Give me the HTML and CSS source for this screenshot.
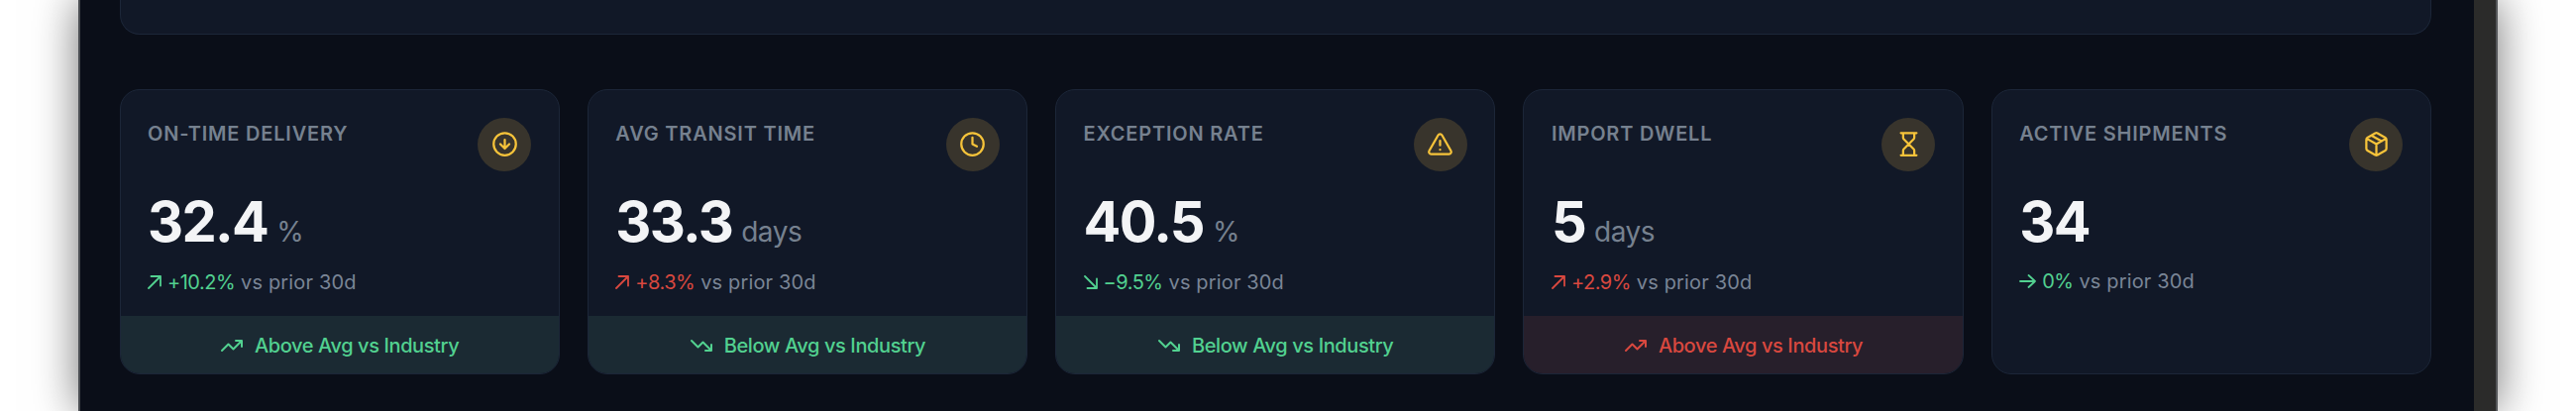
FILE: index.html
```html
<!DOCTYPE html>
<html lang="en">
<head>
<meta charset="utf-8">
<title>Logistics KPIs</title>
<link rel="stylesheet" href="styles.css">
</head>
<body>
<div class="frame">
  <main class="panel">
    <div class="stub"></div>
    <section class="kpis">
      <article class="card">
        <div class="body">
          <header class="head">
            <h3 class="label">ON-TIME DELIVERY</h3>
            <span class="badge"><svg class="ico" viewBox="0 0 24 24"><circle cx="12" cy="12" r="10"/><path d="M12 8v8M8 12l4 4 4-4"/></svg></span>
          </header>
          <div class="value"><span class="num">32.4</span><span class="unit">%</span></div>
          <div class="delta"><svg class="arrow good" viewBox="0 0 14 14"><path d="M1 13 13 1M3.500 1H13v9.500"/></svg><span class="good">+10.2%</span><span class="muted">vs prior 30d</span></div>
        </div>
        <footer class="foot foot-good"><svg class="trend" viewBox="0 0 24 24"><path d="M22 7l-8.500 8.500-5-5L2 17M16 7h6v6"/></svg>Above Avg vs Industry</footer>
      </article>
      <article class="card">
        <div class="body">
          <header class="head">
            <h3 class="label">AVG TRANSIT TIME</h3>
            <span class="badge"><svg class="ico" viewBox="0 0 24 24"><circle cx="12" cy="12" r="10"/><path d="M12 6v6l4 2"/></svg></span>
          </header>
          <div class="value"><span class="num">33.3</span><span class="unit">days</span></div>
          <div class="delta"><svg class="arrow bad" viewBox="0 0 14 14"><path d="M1 13 13 1M3.500 1H13v9.500"/></svg><span class="bad">+8.3%</span><span class="muted">vs prior 30d</span></div>
        </div>
        <footer class="foot foot-good"><svg class="trend" viewBox="0 0 24 24"><path d="M22 17l-8.500-8.500-5 5L2 7M16 17h6v-6"/></svg>Below Avg vs Industry</footer>
      </article>
      <article class="card">
        <div class="body">
          <header class="head">
            <h3 class="label">EXCEPTION RATE</h3>
            <span class="badge"><svg class="ico" viewBox="0 0 24 24"><path d="m21.730 18-8-14a2 2 0 0 0-3.480 0l-8 14A2 2 0 0 0 4 21h16a2 2 0 0 0 1.730-3ZM12 9v4M12 17h.01"/></svg></span>
          </header>
          <div class="value"><span class="num">40.5</span><span class="unit">%</span></div>
          <div class="delta"><svg class="arrow good" viewBox="0 0 14 14"><path d="M1 1 13 13M13 3.500V13H3.500"/></svg><span class="good">−9.5%</span><span class="muted">vs prior 30d</span></div>
        </div>
        <footer class="foot foot-good"><svg class="trend" viewBox="0 0 24 24"><path d="M22 17l-8.500-8.500-5 5L2 7M16 17h6v-6"/></svg>Below Avg vs Industry</footer>
      </article>
      <article class="card">
        <div class="body">
          <header class="head">
            <h3 class="label">IMPORT DWELL</h3>
            <span class="badge"><svg class="ico" viewBox="0 0 24 24"><path d="M5 22h14M5 2h14M17 22v-4.172a2 2 0 0 0-.586-1.414L12 12l-4.414 4.414A2 2 0 0 0 7 17.828V22M7 2v4.172a2 2 0 0 0 .586 1.414L12 12l4.414-4.414A2 2 0 0 0 17 6.172V2"/></svg></span>
          </header>
          <div class="value"><span class="num">5</span><span class="unit">days</span></div>
          <div class="delta"><svg class="arrow bad" viewBox="0 0 14 14"><path d="M1 13 13 1M3.500 1H13v9.500"/></svg><span class="bad">+2.9%</span><span class="muted">vs prior 30d</span></div>
        </div>
        <footer class="foot foot-bad"><svg class="trend" viewBox="0 0 24 24"><path d="M22 7l-8.500 8.500-5-5L2 17M16 7h6v6"/></svg>Above Avg vs Industry</footer>
      </article>
      <article class="card">
        <div class="body">
          <header class="head">
            <h3 class="label">ACTIVE SHIPMENTS</h3>
            <span class="badge"><svg class="ico" viewBox="0 0 24 24"><path d="M7.500 4.270l9 5.150M21 8a2 2 0 0 0-1-1.730l-7-4a2 2 0 0 0-2 0l-7 4A2 2 0 0 0 3 8v8a2 2 0 0 0 1 1.730l7 4a2 2 0 0 0 2 0l7-4A2 2 0 0 0 21 16ZM3.300 7l8.700 5 8.700-5M12 22V12"/></svg></span>
          </header>
          <div class="value"><span class="num">34</span></div>
          <div class="delta delta-flat"><svg class="arrow arrow-flat good" viewBox="0 0 17 14"><path d="M1 7h15M9.500 1 16 7l-6.500 6"/></svg><span class="good">0%</span><span class="muted">vs prior 30d</span></div>
        </div>
      </article>
    </section>
  </main>
  <div class="gutter"></div>
</div>
</body>
</html>
```
FILE: styles.css
```css
* { box-sizing: border-box; }
html, body { margin: 0; height: 100%; background: #fff; overflow: hidden; }
body { padding: 0 79px 0 79px; font-family: "Inter", "Liberation Sans", sans-serif; }
.frame {
  display: flex; height: 415px;
  box-shadow: 0 0 42px rgba(0,0,0,.55);
  border-left: 2px solid #4a4d52;
  border-right: 2px solid #55575a;
}
.panel { flex: 1; min-width: 0; background: #0a0e18; padding: 0 43px 0 39.500px; }
.gutter { width: 22px; background: #2b2b2a; }
.stub {
  height: 35px; background: #111827;
  border: 1.500px solid #1c2638; border-top: 0;
  border-radius: 0 0 20px 20px;
}
.kpis { display: grid; grid-template-columns: repeat(5, 1fr); gap: 28px; margin-top: 55px; }
.card {
  height: 288px; display: flex; flex-direction: column;
  background: #111827; border: 1.500px solid #1c2638; border-radius: 20px; overflow: hidden;
}
.body { flex: 1; padding: 27.500px 27.500px 0; }
.head { display: flex; justify-content: space-between; align-items: flex-start; }
.label { margin: 4px 0 0; font-size: 20px; line-height: 24px; font-weight: 600; letter-spacing: .8px; color: #76818f; }
.badge {
  width: 54px; height: 54px; border-radius: 50%; background: #38342c;
  display: flex; align-items: center; justify-content: center;
}
.ico { width: 27px; height: 27px; fill: none; stroke: #f6c33a; stroke-width: 2; stroke-linecap: round; stroke-linejoin: round; }
.value { display: flex; align-items: baseline; gap: 9px; margin-top: 17px; height: 68px; line-height: 68px; }
.num { font-size: 56px; font-weight: 700; color: #f3f4f6; letter-spacing: -1.700px; }
.unit { font-size: 28px; line-height: 1; font-weight: 400; color: #76818f; letter-spacing: -.5px; }
.delta { display: flex; align-items: center; gap: 6px; margin-top: 13px; font-size: 20px; line-height: 28px; letter-spacing: -.5px; }
.delta-flat { margin-top: 12px; }
.muted { color: #7a8596; margin-left: 0; letter-spacing: .15px; }
.good { color: #52d190; }
.bad { color: #d9483f; }
.arrow { width: 14px; height: 14px; fill: none; stroke: currentColor; stroke-width: 1.800; stroke-linecap: round; stroke-linejoin: round; }
.arrow-flat { width: 17px; }
.foot {
  height: 58px; padding-top: 2px; display: flex; align-items: center; justify-content: center; gap: 11px;
  font-size: 20px; font-weight: 500; letter-spacing: -.4px;
}
.foot-good { background: #1b2a33; color: #52d190; }
.foot-bad { background: #271f2b; color: #d9483f; }
.trend { width: 24px; height: 24px; fill: none; stroke: currentColor; stroke-width: 2; stroke-linecap: round; stroke-linejoin: round; }
```
